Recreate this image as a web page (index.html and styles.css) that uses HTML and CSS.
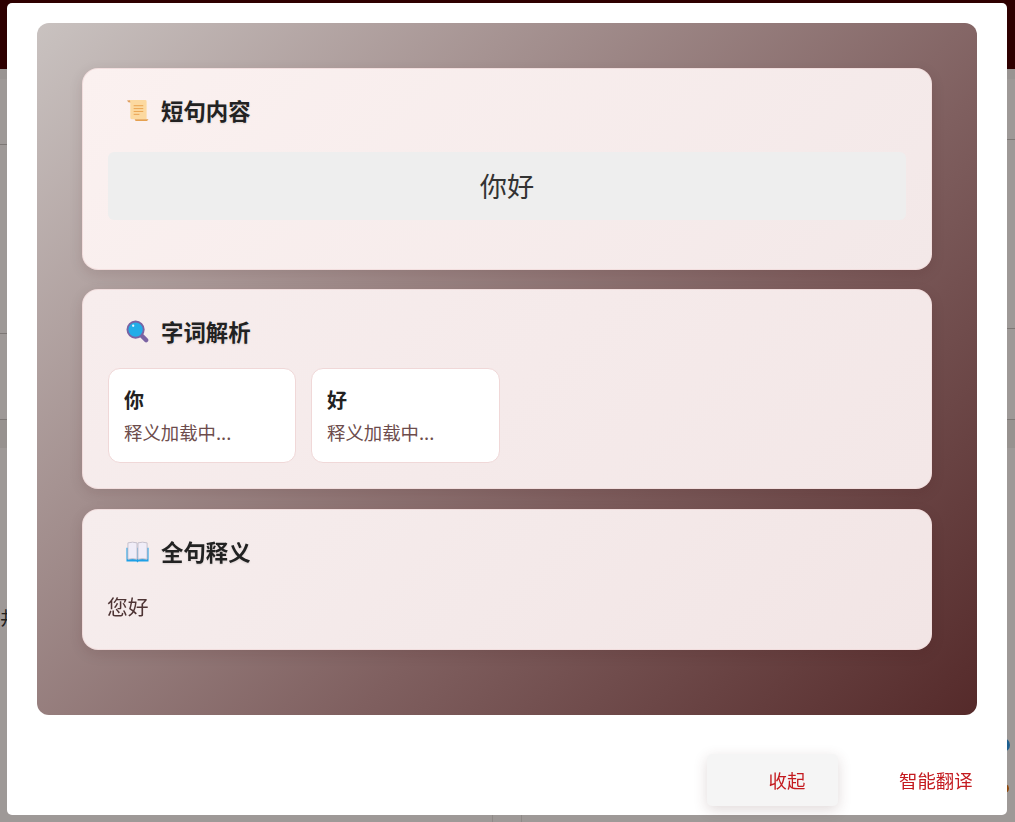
FILE: index.html
```html
<!DOCTYPE html>
<html>
<head>
<meta charset="utf-8">
<meta name="viewport" content="width=device-width, initial-scale=1.0">
<title>智能翻译</title>
<link rel="stylesheet" href="styles.css">
</head>
<body>
<div class="page">
  <div class="page-header"></div>
  <div class="page-main">
    <div class="col col-left">
      <div class="row row1"></div>
      <div class="row row2"></div>
      <div class="row row3"></div>
      <div class="rest"><span class="rest-text">井</span></div>
    </div>
    <div class="col col-right">
      <div class="row row1r"></div>
      <div class="row row2"></div>
      <div class="row row3r"></div>
      <div class="rest"></div>
    </div>
  </div>
  <span class="dot dot-blue"></span>
  <span class="dot dot-orange"></span>
</div>

<div class="mask">
  <div class="dialog">
    <div class="panel">
      <section class="card card1">
        <h2 class="card-title">
          <svg class="icon" viewBox="0 0 24 24">
            <path d="M1 1.500 L6 1 L6 4 L2.500 3.500 Z" fill="#e0a060"/>
            <path d="M4 1 H20 Q21.500 1 21.500 2.500 V21 H6 Q4.500 21 4.500 19.500 V3 Z" fill="#fcd9a0"/>
            <path d="M8 7 H18 M8 10 H18 M8 13 H18 M8 16 H14" stroke="#e9a24e" stroke-width="1"/>
            <path d="M9 21 H23.500 L22 23 H10 Z" fill="#e5a050"/>
          </svg>
          短句内容
        </h2>
        <div class="phrase">你好</div>
      </section>
      <section class="card card2">
        <h2 class="card-title">
          <svg class="icon" viewBox="0 0 24 24">
            <path d="M15 15 L21 21" stroke="#7b63a3" stroke-width="4.500" stroke-linecap="round"/>
            <circle cx="10" cy="10" r="8.500" fill="#22ade8" stroke="#7b63a3" stroke-width="2"/>
            <circle cx="7.500" cy="6" r="1.200" fill="#e8f7ff"/>
          </svg>
          字词解析
        </h2>
        <div class="words">
          <div class="word">
            <div class="word-text">你</div>
            <div class="word-mean">释义加载中...</div>
          </div>
          <div class="word">
            <div class="word-text">好</div>
            <div class="word-mean">释义加载中...</div>
          </div>
        </div>
      </section>
      <section class="card card3">
        <h2 class="card-title">
          <svg class="icon" viewBox="0 0 24 24">
            <path d="M0.500 8 H23.500 V22.500 H13 L12 23.500 L11 22.500 H0.500 Z" fill="#1ea0e6"/>
            <path d="M2 3 Q7 1.500 11.500 3 V20 Q7 19 2 20 Z" fill="#f0edf8" stroke="#c4bfcc" stroke-width="1"/>
            <path d="M12.500 3 Q17 1.500 22 3 V20 Q17 19 12.500 20 Z" fill="#f0edf8" stroke="#c4bfcc" stroke-width="1"/>
          </svg>
          全句释义
        </h2>
        <p class="result">您好</p>
      </section>
    </div>
    <div class="footer">
      <button type="button" class="btn btn-fold">收起</button>
      <button type="button" class="btn btn-text">智能翻译</button>
    </div>
  </div>
</div>
</body>
</html>
```

FILE: styles.css
```css
html,body {
  margin: 0;
  padding: 0;
  height: 100%;
  overflow: hidden;
  font-family: "Noto Sans CJK SC", "Noto Sans", sans-serif;
  color: #222;
}
/* page behind the mask */
.page {
  position: relative;
  height: 822px;
  background: #f8f0ec;
  overflow: hidden;
}
.page-header {
  height: 69px;
  background: #480000;
}
.page-main {
  display: flex;
  height: 753px;
}
.col {
  display: flex;
  flex-direction: column;
}
.col-left {
  width: 492px;
  border-right: 1px solid #e0d8d4;
}
.col-right {
  flex: 1;
  margin-left: 28px;
  border-left: 1px solid #e0d8d4;
}
.row {
  border-bottom: 1px solid #c4bcb8;
  box-sizing: border-box;
}
.row1 { height: 76px; }
.row1r { height: 71px; }
.row1, .row1r { background: linear-gradient(#f0e8e4 0, #f0e8e4 10px, transparent 10px); }
.row2 { height: 189px; }
.row3 { height: 86px; }
.row3r { height: 91px; }
.rest {
  flex: 1;
  padding-top: 184px;
  background: linear-gradient(#ece4e0 0, #ece4e0 28px, transparent 28px);
}
.rest-text {
  display: block;
  font-size: 18px;
  line-height: 26px;
  color: #333;
}
.dot {
  position: absolute;
  border-radius: 50%;
}
.dot-blue {
  top: 738px;
  left: 996px;
  width: 14px;
  height: 14px;
  background: #3095e0;
}
.dot-orange {
  top: 784px;
  left: 1000px;
  width: 9px;
  height: 9px;
  background: #e07010;
}
/* dialog */
.mask {
  position: fixed;
  top: 0;
  left: 0;
  right: 0;
  bottom: 0;
  background: rgba(0,0,0,.36);
}
.dialog {
  width: 1000px;
  height: 812px;
  margin: 3px 0 0 7px;
  padding: 20px 30px 0;
  box-sizing: border-box;
  background: #fff;
  border-radius: 5px;
}
.panel {
  height: 692px;
  padding: 45px;
  box-sizing: border-box;
  border-radius: 12px;
  background: linear-gradient(135deg, #c9c2c0 0%, #7f5f5f 62%, #552a2a 100%);
}
.card {
  box-sizing: border-box;
  padding: 24px 25px 0;
  margin-bottom: 20px;
  border: 1px solid rgba(240,215,215,.7);
  border-radius: 16px;
  box-shadow: 0 4px 14px rgba(60,20,20,.12);
}
.card1 {
  height: 202px;
  margin-bottom: 19px;
  background: linear-gradient(135deg, #fbf1f0 0%, #f3e8e8 100%);
}
.card2 {
  height: 200px;
  background: linear-gradient(135deg, #f7eded 0%, #f3e7e7 100%);
}
.card3 {
  height: 141px;
  background: linear-gradient(135deg, #f6eded 0%, #f2e5e5 100%);
}
.card-title {
  display: flex;
  align-items: center;
  height: 34px;
  margin: 0;
  padding-left: 18px;
  font-size: 22.4px;
  line-height: 34px;
  font-weight: 700;
  color: #222;
  text-shadow: 0 1px 2px rgba(0,0,0,.12);
}
.icon {
  width: 23px;
  height: 23px;
  margin-right: 12px;
  flex: none;
}
.phrase {
  height: 68px;
  margin-top: 25px;
  line-height: 66px;
  text-align: center;
  font-size: 27.2px;
  color: #333;
  background: #eee;
  border-radius: 6px;
}
.words {
  display: grid;
  grid-template-columns: 188px 189px;
  gap: 15px;
  margin-top: 20px;
}
.word {
  height: 95px;
  padding: 16px 15px 0;
  box-sizing: border-box;
  background: #fff;
  border: 1px solid #f0d8d8;
  border-radius: 12px;
}
.word-text {
  font-size: 20px;
  line-height: 30px;
  font-weight: 700;
  color: #222;
}
.word-mean {
  margin-top: 2px;
  font-size: 18.4px;
  line-height: 30px;
  color: #6d4c4c;
}
.result {
  margin: 23px 0 0 -1px;
  font-size: 20.8px;
  line-height: 30px;
  color: #4e3434;
}
.footer {
  display: flex;
  justify-content: flex-end;
  gap: 39px;
  margin-top: 39px;
}
.btn {
  height: 52px;
  border: 0;
  padding: 0;
  font-family: inherit;
  font-size: 18.4px;
  color: #c41a1f;
  background: none;
}
.btn-fold {
  width: 131px;
  padding-left: 29px;
  background: #f5f5f5;
  border-radius: 5px;
  box-shadow: 0 4px 14px rgba(90,50,50,.18);
}
.btn-text {
  width: 100px;
  padding-left: 22px;
  padding-right: 5px;
  white-space: nowrap;
}
```
